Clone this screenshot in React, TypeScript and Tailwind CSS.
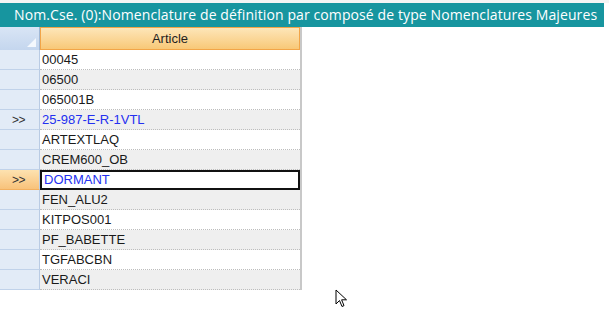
const rows = [
  { code: "00045" },
  { code: "06500" },
  { code: "065001B" },
  { code: "25-987-E-R-1VTL", mark: true },
  { code: "ARTEXTLAQ" },
  { code: "CREM600_OB" },
  { code: "DORMANT", mark: true, current: true },
  { code: "FEN_ALU2" },
  { code: "KITPOS001" },
  { code: "PF_BABETTE" },
  { code: "TGFABCBN" },
  { code: "VERACI" },
];

function Cursor() {
  return (
    <svg width="14" height="20" viewBox="0 0 14 20" className="absolute left-[335px] top-[289px]">
      <path d="M1 1 L1 15 L4.5 11.5 L7 17.5 L9 16.6 L6.6 10.8 L11.5 10.8 Z" fill="#fff" stroke="#000" strokeWidth="1" />
    </svg>
  );
}

export default function App() {
  return (
    <div className="relative w-[609px] h-[335px] bg-white overflow-hidden">
      <div className="h-[3px] bg-[#f4f4f4]" />
      <div
        className="h-[24px] w-[604px] bg-[#17959f] text-white text-[14px] leading-[24px] pl-[14px] whitespace-nowrap tracking-[0.1px]"
        style={{ fontFamily: '"Open Sans", sans-serif' }}
      >
        Nom.Cse. (0):Nomenclature de définition par composé de type Nomenclatures Majeures
      </div>

      <div className="w-[302px] border-r-2 border-[#c8c8c8]" style={{ fontFamily: '"Liberation Sans", Arial, sans-serif' }}>
        <div className="flex h-[23px]">
          <div className="relative w-[40px] bg-gradient-to-b from-[#d9e5f5] to-[#c4d6ee] border-r border-[#9fb7d6]">
            <div className="absolute right-[3px] bottom-[3px] w-0 h-0 border-l-[9px] border-l-transparent border-b-[9px] border-b-[#f4f8fd]" />
          </div>
          <div className="flex-1 flex items-center justify-center bg-gradient-to-b from-[#fde6b8] to-[#f8c877] border border-[#f2a548] text-[13px] text-[#1e1e1e]">
            Article
          </div>
        </div>
        {rows.map((r, i) => (
          <div key={r.code} className="flex h-[20px]">
            <div
              className={
                "w-[40px] flex items-center pl-[12px] text-[12px] text-[#333] border-r border-[#b9cbe4] border-b " +
                (r.current ? "bg-gradient-to-b from-[#fde2b0] to-[#f8c27a] border-b-[#f2b060]" : "bg-[#e2ebf7] border-b-[#c0d2ea]")
              }
            >
              {r.mark ? <span className="tracking-[-0.5px]">&gt;&gt;</span> : null}
            </div>
            <div
              className={
                "flex-1 flex items-center pl-[2px] text-[13px] " +
                (r.current
                  ? "bg-white border-2 border-[#111] text-[#2430f0]"
                  : (i % 2 === 0 ? "bg-white " : "bg-[#efefef] ") +
                    "border-b border-dotted border-b-[#bdbdbd] " +
                    (r.mark ? "text-[#2430f0]" : "text-[#1a1a1a]"))
              }
            >
              {r.code}
            </div>
          </div>
        ))}
      </div>
      <Cursor />
    </div>
  );
}
